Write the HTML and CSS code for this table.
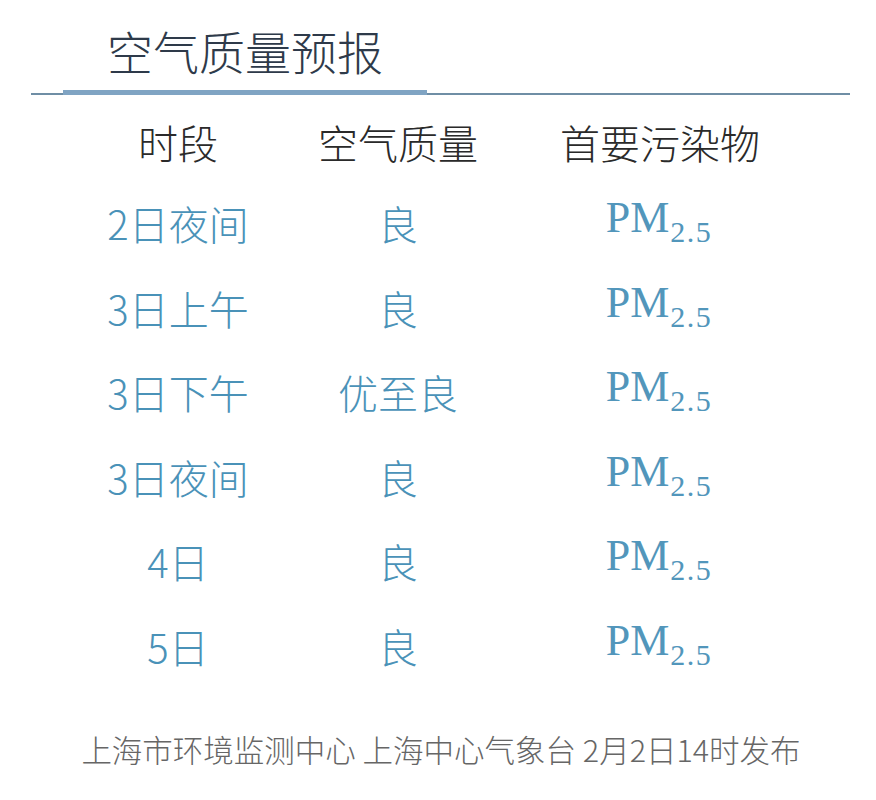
FILE: index.html
```html
<!DOCTYPE html>
<html lang="zh-CN">
<head>
<meta charset="utf-8">
<link rel="stylesheet" href="styles.css">
</head>
<body>
<div class="page">
  <div class="title">空气质量预报</div>
  <div class="rule"><div class="rule-thick"></div></div>
  <div class="table">
    <div class="cell head">时段</div>
    <div class="cell head">空气质量</div>
    <div class="cell head">首要污染物</div>

    <div class="cell val">2日夜间</div>
    <div class="cell val">良</div>
    <div class="cell pm"><span class="pm-text">PM<sub>2.5</sub></span></div>

    <div class="cell val">3日上午</div>
    <div class="cell val">良</div>
    <div class="cell pm"><span class="pm-text">PM<sub>2.5</sub></span></div>

    <div class="cell val">3日下午</div>
    <div class="cell val">优至良</div>
    <div class="cell pm"><span class="pm-text">PM<sub>2.5</sub></span></div>

    <div class="cell val">3日夜间</div>
    <div class="cell val">良</div>
    <div class="cell pm"><span class="pm-text">PM<sub>2.5</sub></span></div>

    <div class="cell val">4日</div>
    <div class="cell val">良</div>
    <div class="cell pm"><span class="pm-text">PM<sub>2.5</sub></span></div>

    <div class="cell val">5日</div>
    <div class="cell val">良</div>
    <div class="cell pm"><span class="pm-text">PM<sub>2.5</sub></span></div>
  </div>
  <div class="footer">上海市环境监测中心 上海中心气象台 2月2日14时发布</div>
</div>
</body>
</html>
```
FILE: styles.css
```css
html, body {
  margin: 0;
  padding: 0;
  background: #ffffff;
}
.page {
  width: 876px;
  height: 800px;
  font-family: "Noto Sans CJK SC", "Noto Sans", sans-serif;
  font-weight: 300;
}
.title {
  padding: 25px 0 0 107px;
  font-size: 46px;
  line-height: 50px;
  color: #2e3a4a;
  height: 68px;
}
.rule {
  margin: 0 26px 0 31px;
  height: 2px;
  background: #6f8ea5;
  position: relative;
}
.rule-thick {
  position: absolute;
  left: 32px;
  top: -3px;
  width: 364px;
  height: 5px;
  background: #80a4c3;
}
.table {
  display: grid;
  grid-template-columns: 200px 240px 284px;
  grid-template-rows: 74px;
  grid-auto-rows: 84.5px;
  margin: 12px 0 0 78px;
}
.cell {
  display: flex;
  align-items: center;
  justify-content: center;
  font-size: 40px;
  line-height: 1;
}
.head {
  color: #2a2a2a;
  padding-bottom: 4px;
}
.val {
  color: #4a92b8;
}
.pm {
  color: #5296bb;
  font-family: "Liberation Serif", "DejaVu Serif", serif;
  font-weight: 400;
  font-size: 44px;
}
.pm-text {
  display: block;
  line-height: 44px;
  height: 44px;
  margin-bottom: 10px;
  padding-right: 2px;
}
.pm sub {
  font-size: 30px;
  line-height: 0;
  vertical-align: -10px;
  letter-spacing: 1.5px;
  margin-left: 1px;
}
.footer {
  margin-top: 39px;
  text-align: center;
  font-size: 30.5px;
  color: #666666;
  padding-left: 6px;
}
```
